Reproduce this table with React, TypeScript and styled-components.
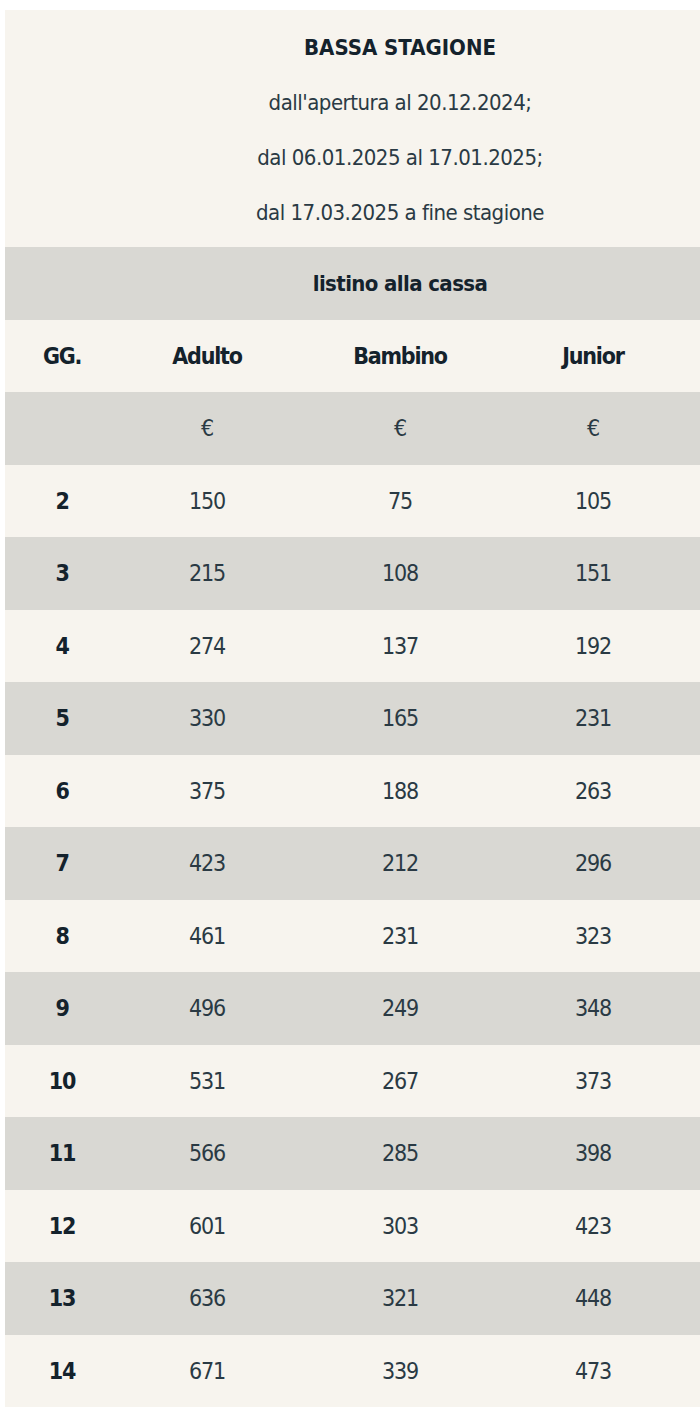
import styled, { createGlobalStyle } from 'styled-components';

const GlobalStyle = createGlobalStyle`
    html, body {
        margin: 0;
        padding: 0;
        background: #ffffff;
        overflow: hidden;
    }
    body {
        font-family: "Liberation Sans Narrow", "DejaVu Sans Condensed", "Liberation Sans", sans-serif;
        color: #1d2b36;
    }
`;

const Page = styled.div`
    padding: 10px 0 0 5px;
    width: 700px;
    overflow: hidden;
`;

const PriceTable = styled.div`
    width: 790px;
    display: flex;
    flex-direction: column;
`;

const Heading = styled.div`
    background: #f7f4ee;
    padding: 10px 0 7px;
    display: flex;
    flex-direction: column;
    align-items: center;
    font-size: 22px;
    line-height: 55px;
`;

const Title = styled.div`
    font-weight: 700;
    color: #14222c;
`;

const Period = styled.div`
    color: #2a3a44;
    letter-spacing: -0.5px;
`;

const Row = styled.div<{ $shade?: boolean }>`
    display: grid;
    grid-template-columns: 114px 176px 210px 176px 114px;
    align-items: center;
    height: 72.5px;
    background: ${p => (p.$shade ? '#d9d8d3' : '#f7f4ee')};
    font-size: 23px;
    letter-spacing: -1.2px;
`;

const Banner = styled(Row)`
    display: flex;
    justify-content: center;
    font-weight: 700;
    font-size: 22px;
    letter-spacing: -0.6px;
    color: #14222c;
`;

const Cell = styled.div<{ $bold?: boolean }>`
    text-align: center;
    font-weight: ${p => (p.$bold ? 700 : 400)};
    color: ${p => (p.$bold ? '#14222c' : '#2a3a44')};
`;

const prices: [number, number, number, number][] = [
    [2, 150, 75, 105],
    [3, 215, 108, 151],
    [4, 274, 137, 192],
    [5, 330, 165, 231],
    [6, 375, 188, 263],
    [7, 423, 212, 296],
    [8, 461, 231, 323],
    [9, 496, 249, 348],
    [10, 531, 267, 373],
    [11, 566, 285, 398],
    [12, 601, 303, 423],
    [13, 636, 321, 448],
    [14, 671, 339, 473],
];

export default function App() {
    return (
        <>
            <GlobalStyle />
            <Page>
                <PriceTable>
                    <Heading>
                        <Title>BASSA STAGIONE</Title>
                        <Period>dall'apertura al 20.12.2024;</Period>
                        <Period>dal 06.01.2025 al 17.01.2025;</Period>
                        <Period>dal 17.03.2025 a fine stagione</Period>
                    </Heading>
                    <Banner $shade>listino alla cassa</Banner>
                    <Row>
                        <Cell $bold>GG.</Cell>
                        <Cell $bold>Adulto</Cell>
                        <Cell $bold>Bambino</Cell>
                        <Cell $bold>Junior</Cell>
                        <Cell />
                    </Row>
                    <Row $shade>
                        <Cell />
                        <Cell>€</Cell>
                        <Cell>€</Cell>
                        <Cell>€</Cell>
                        <Cell />
                    </Row>
                    {prices.map(([days, adult, child, junior], i) => (
                        <Row key={days} $shade={i % 2 === 1}>
                            <Cell $bold>{days}</Cell>
                            <Cell>{adult}</Cell>
                            <Cell>{child}</Cell>
                            <Cell>{junior}</Cell>
                            <Cell />
                        </Row>
                    ))}
                </PriceTable>
            </Page>
        </>
    );
}
